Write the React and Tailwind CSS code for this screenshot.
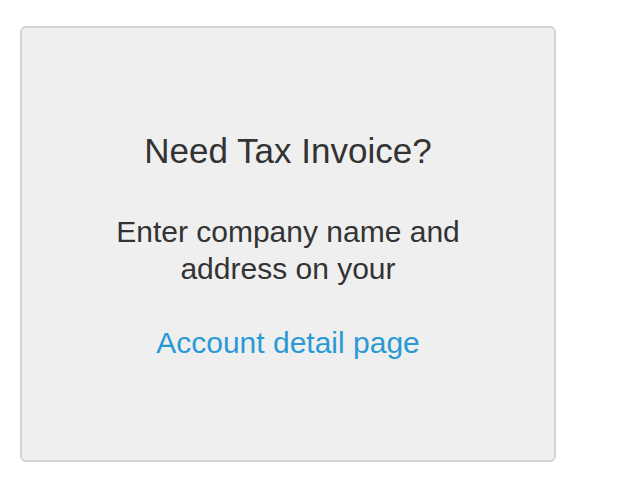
export default function App() {
  return (
    <div className="w-[620px] h-[484px] bg-white" style={{ fontFamily: '"Liberation Sans", Arial, sans-serif' }}>
      <div className="pt-[26px] pl-[20px]">
        <div className="w-[536px] h-[436px] bg-[#efefef] border-2 border-[#d4d4d4] rounded-[6px] flex flex-col items-center pt-[103px] text-center">
          <h2 className="text-[35px] leading-[40px] text-[#333333] font-normal">Need Tax Invoice?</h2>
          <p className="mt-[42px] text-[30px] leading-[37px] text-[#333333]">
            Enter company name and<br />address on your
          </p>
          <a className="mt-[37px] text-[30px] leading-[37px] text-[#2a9ad6] cursor-pointer">Account detail page</a>
        </div>
      </div>
    </div>
  );
}
